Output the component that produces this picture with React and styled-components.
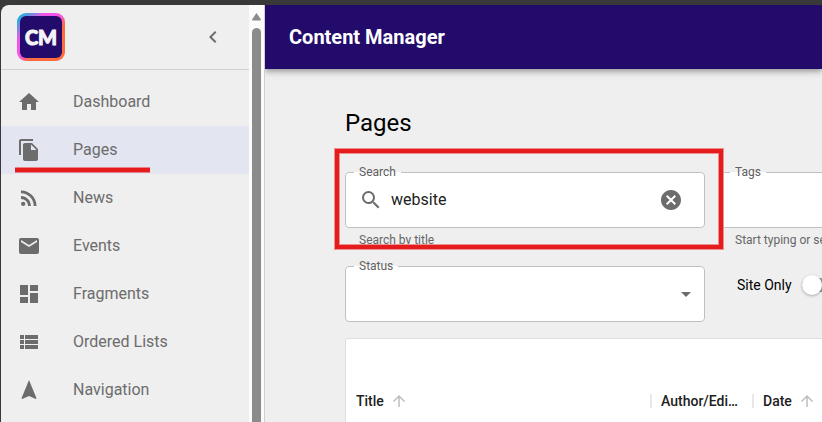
import React, { useState } from "react";
import styled, { createGlobalStyle } from "styled-components";
import {
  MdHome,
  MdFileCopy,
  MdRssFeed,
  MdEmail,
  MdDashboard,
  MdViewList,
  MdNavigation,
  MdSearch,
  MdCancel,
  MdArrowDropDown,
  MdArrowUpward,
  MdChevronLeft,
} from "react-icons/md";

const GlobalStyle = createGlobalStyle`
  *, *::before, *::after { box-sizing: border-box; }
  body {
    margin: 0;
    background: #393939;
    color: #000;
    font-family: Roboto, "Liberation Sans", sans-serif;
  }
  button, input, select { font: inherit; color: inherit; }
`;

const Frame = styled.div`
  display: flex;
  height: 100vh;
  padding: 5px 0 0 1px;
  overflow: hidden;
`;

const Sidebar = styled.aside`
  display: flex;
  flex: none;
  width: 264px;
  background: #efefef;
  border-right: 1px solid #cfcfcf;
  border-top-left-radius: 8px;
  overflow: hidden;
`;

const SidebarContent = styled.div`
  flex: 1;
`;

const Brand = styled.div`
  display: flex;
  align-items: center;
  justify-content: space-between;
  height: 65px;
  padding: 0 24px 0 16px;
  border-bottom: 1px solid #d2d2d2;
`;

const Logo = styled.div`
  display: grid;
  place-items: center;
  width: 48px;
  height: 48px;
  border: 3px solid transparent;
  border-radius: 9px;
  background:
    linear-gradient(#230b6b, #230b6b) padding-box,
    linear-gradient(135deg, #12b5dd 5%, #f455e8 30%, #f455e8 48%, #ff6b3d 62%, #ff6b3d 100%) border-box;
  color: #f4f4f6;
  font: 900 20px/24px Lato, sans-serif;
  -webkit-text-stroke: 1px #f4f4f6;
`;

const IconButton = styled.button`
  display: grid;
  place-items: center;
  padding: 0;
  width: ${(p) => p.$size}px;
  height: ${(p) => p.$size}px;
  border: 0;
  background: none;
  color: #6c6c6c;
  cursor: pointer;
`;

const NavList = styled.nav`
  display: flex;
  flex-direction: column;
  padding: 8px 0;
`;

const NavItem = styled.a`
  position: relative;
  display: flex;
  align-items: center;
  gap: 32px;
  height: 48px;
  padding: 0 16px;
  background: ${(p) => (p.$active ? "#e3e5f1" : "transparent")};
  color: #6c6c6c;
  font-size: 16px;
  line-height: 24px;
  text-decoration: none;
`;

const Underline = styled.span`
  position: absolute;
  left: 14px;
  bottom: 2px;
  width: 135px;
  height: 4px;
  background: #e61b1b;
  box-shadow: 0 1px #e9838a, 0 -1px #e9838a;
`;

const Scrollbar = styled.div`
  display: flex;
  flex-direction: column;
  align-items: center;
  width: 15px;
  padding-top: 8px;
  background: #fcfcfc;
`;

const ScrollThumb = styled.div`
  flex: 1;
  width: 9px;
  margin-top: 7px;
  border-radius: 5px 5px 0 0;
  background: #8b8b8b;
`;

const Main = styled.main`
  flex: 1;
  min-width: 0;
  background: #efefef;
  overflow: hidden;
`;

const AppBar = styled.header`
  display: flex;
  align-items: center;
  height: 64px;
  padding: 0 24px;
  background: #230b6b;
  box-shadow: 0 2px 4px -1px rgba(0, 0, 0, 0.2), 0 4px 5px rgba(0, 0, 0, 0.14),
    0 1px 10px rgba(0, 0, 0, 0.12);
  color: #fff;
  font-size: 20px;
  font-weight: 700;
  line-height: 32px;
`;

const Content = styled.div`
  padding: 36px 0 0 80px;
`;

const PageTitle = styled.h1`
  margin: 0 0 25px;
  font-size: 24px;
  font-weight: 400;
  line-height: 36px;
`;

const Filters = styled.form`
  display: grid;
  grid-template-columns: 360px 360px;
  column-gap: 16px;
  row-gap: 10px;
  margin-bottom: 16px;
`;

const FieldGroup = styled.div`
  position: relative;
`;

const Outline = styled.fieldset`
  min-width: 0;
  margin: 0;
  padding: 0 0 5px;
  border: 1px solid #c0c0c0;
  border-radius: 4px;
  background: #fff;
`;

const Legend = styled.legend`
  margin-left: 8px;
  padding: 0 5px;
  color: #606060;
  font-size: 12px;
  line-height: 12px;
`;

const FieldBody = styled.div`
  display: flex;
  align-items: center;
  gap: 8px;
  height: 44px;
  padding: 0 13px;
  color: #6c6c6c;
`;

const TextInput = styled.input`
  flex: 1;
  min-width: 0;
  padding: 0;
  border: 0;
  outline: 0;
  background: none;
  color: #212121;
  font-size: 16px;
  line-height: 24px;
`;

const SelectBody = styled(FieldBody)`
  padding: 0 6px 0 13px;
`;

const SelectInput = styled.select`
  flex: 1;
  min-width: 0;
  border: 0;
  outline: 0;
  appearance: none;
  background: none;
  font-size: 16px;
`;

const Helper = styled.p`
  margin: 2px 14px 0;
  color: #666;
  font-size: 12px;
  line-height: 20px;
`;

const Highlight = styled.div`
  position: absolute;
  z-index: 1;
  inset: -17px -18px 1px -10px;
  border: 4px solid #e61b1b;
  box-shadow: 0 0 0 1px #ea9090, inset 0 0 0 1px #ea9090;
  pointer-events: none;
`;

const SwitchLabel = styled.label`
  display: flex;
  align-items: center;
  gap: 10px;
  height: 50px;
  padding-left: 16px;
  font-size: 14px;
`;

const Switch = styled.input`
  display: flex;
  align-items: center;
  appearance: none;
  width: 36px;
  height: 14px;
  margin: 0;
  border-radius: 7px;
  background: #9c9c9c;

  &::before {
    content: "";
    width: 20px;
    height: 20px;
    flex: none;
    border-radius: 50%;
    background: #fff;
    box-shadow: 0 1px 3px rgba(0, 0, 0, 0.3);
  }

  &:checked {
    justify-content: flex-end;
  }
`;

const Panel = styled.section`
  min-width: 736px;
  padding-top: 34px;
  border: 1px solid #dedede;
  border-radius: 3px;
  background: #fff;
`;

const Table = styled.table`
  width: 100%;
  table-layout: fixed;
  border-collapse: collapse;
`;

const HeadCell = styled.th`
  width: ${(p) => (p.$width ? `${p.$width}px` : "auto")};
  height: 56px;
  padding: 0;
  color: #212121;
  font-size: 14px;
  font-weight: 500;
  line-height: 14px;
  text-align: left;
`;

const HeadLabel = styled.div`
  padding: 0 12px 0 ${(p) => (p.$divider ? 9 : 10)}px;
  border-left: ${(p) => (p.$divider ? "2px solid #e8e8e8" : "0")};
`;

const HeadText = styled.div`
  display: flex;
  align-items: center;
  gap: 6px;
  height: 14px;
  svg { flex: none; color: #bdbdbd; }
`;

const Ellipsis = styled.span`
  overflow: hidden;
  line-height: 20px;
  text-overflow: ellipsis;
  white-space: nowrap;
`;

const NAV = [
  ["Dashboard", MdHome],
  ["Pages", MdFileCopy],
  ["News", MdRssFeed],
  ["Events", MdEmail],
  ["Fragments", MdDashboard],
  ["Ordered Lists", MdViewList],
  ["Navigation", MdNavigation],
];

const COLUMNS = [
  { name: "Title", width: 304, sortable: true },
  { name: "Author/Editor", width: 102 },
  { name: "Date", sortable: true },
];

function Field({ id, label, helper, children, highlighted, Body = FieldBody }) {
  return (
    <FieldGroup>
      <Outline>
        <Legend>
          <label htmlFor={id}>{label}</label>
        </Legend>
        <Body>{children}</Body>
      </Outline>
      {helper && <Helper>{helper}</Helper>}
      {highlighted && <Highlight />}
    </FieldGroup>
  );
}

export default function App() {
  const [search, setSearch] = useState("website");
  return (
    <>
      <GlobalStyle />
      <Frame>
        <Sidebar>
          <SidebarContent>
            <Brand>
              <Logo>CM</Logo>
              <IconButton $size={24} aria-label="Collapse menu">
                <MdChevronLeft size={24} />
              </IconButton>
            </Brand>
            <NavList>
              {NAV.map(([name, Icon]) => (
                <NavItem key={name} href="#" $active={name === "Pages"}>
                  <Icon size={24} />
                  {name}
                  {name === "Pages" && <Underline />}
                </NavItem>
              ))}
            </NavList>
          </SidebarContent>
          <Scrollbar aria-hidden="true">
            <svg width="9" height="8" viewBox="0 0 9 8">
              <path d="M4.5 0 9 6.4Q9 7.5 8 7.5H1Q0 7.5 0 6.4Z" fill="#8b8b8b" />
            </svg>
            <ScrollThumb />
          </Scrollbar>
        </Sidebar>
        <Main>
          <AppBar>Content Manager</AppBar>
          <Content>
            <PageTitle>Pages</PageTitle>
            <Filters onSubmit={(e) => e.preventDefault()}>
              <Field id="search" label="Search" helper="Search by title" highlighted>
                <MdSearch size={24} />
                <TextInput
                  id="search"
                  value={search}
                  onChange={(e) => setSearch(e.target.value)}
                />
                <IconButton
                  type="button"
                  $size={40}
                  aria-label="Clear search"
                  onClick={() => setSearch("")}
                >
                  <MdCancel size={24} />
                </IconButton>
              </Field>
              <Field id="tags" label="Tags" helper="Start typing or select">
                <TextInput id="tags" />
              </Field>
              <Field id="status" label="Status" Body={SelectBody}>
                <SelectInput id="status" />
                <MdArrowDropDown size={24} />
              </Field>
              <SwitchLabel>
                Site Only
                <Switch type="checkbox" role="switch" />
              </SwitchLabel>
            </Filters>
            <Panel>
              <Table>
                <thead>
                  <tr>
                    {COLUMNS.map(({ name, width, sortable }, i) => (
                      <HeadCell key={name} scope="col" $width={width}>
                        <HeadLabel $divider={i > 0}>
                          <HeadText>
                            <Ellipsis>{name}</Ellipsis>
                            {sortable && <MdArrowUpward size={18} />}
                          </HeadText>
                        </HeadLabel>
                      </HeadCell>
                    ))}
                  </tr>
                </thead>
              </Table>
            </Panel>
          </Content>
        </Main>
      </Frame>
    </>
  );
}
